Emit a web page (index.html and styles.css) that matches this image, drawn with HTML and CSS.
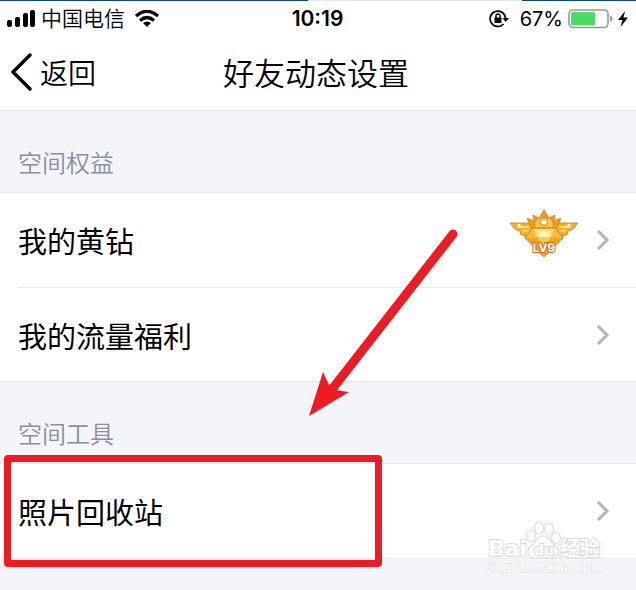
FILE: index.html
```html
<!DOCTYPE html>
<html lang="zh-CN">
<head>
    <meta charset="UTF-8">
    <meta name="viewport" content="width=device-width, initial-scale=1.0">
    <title>好友动态设置</title>
    <link rel="stylesheet" href="styles.css">
</head>
<body>

<div class="top-line"></div>

<div class="status-bar">
    <div class="status-left">
        <svg class="signal" width="30" height="18" viewBox="0 0 30 18">
            <rect x="0" y="10" width="5" height="7" rx="2"/>
            <rect x="8" y="7" width="5" height="10" rx="2"/>
            <rect x="16" y="3" width="5" height="14" rx="2"/>
            <rect x="23" y="0" width="5" height="17" rx="2"/>
        </svg>
        <span class="carrier">中国电信</span>
        <svg class="wifi" width="26" height="18" viewBox="0 0 26 18">
            <path d="M2 6Q13 -3.500 24 6M6 10.500Q13 4.500 20 10.500" fill="none" stroke="#000" stroke-width="3.200"/>
            <path d="M9 13Q13 10 17 13L13 17Z"/>
        </svg>
    </div>
    <div class="clock">10:19</div>
    <div class="status-right">
        <svg class="lock" width="20" height="18" viewBox="0 0 20 18">
            <path d="M16.500 8A7.700 7.700 0 1 0 14.500 14" fill="none" stroke="#000" stroke-width="1.700"/>
            <path d="M13.500 8H20L16.700 12Z"/>
            <rect x="5.500" y="7.500" width="7" height="5.500" rx="0.500"/>
            <path d="M7 8V6a2 2 0 0 1 4 0v2" fill="none" stroke="#000" stroke-width="1.400"/>
        </svg>
        <span class="percent">67%</span>
        <svg class="battery" width="45" height="20" viewBox="0 0 45 20">
            <rect x="1" y="1" width="39" height="17.500" rx="4" fill="#fff" stroke="#999" stroke-width="1.600"/>
            <rect x="3" y="3" width="24" height="13.500" rx="1.500" fill="#4cd964"/>
            <path d="M42 6.500Q44.500 7.500 44.500 9.800T42 13Z" fill="#999"/>
        </svg>
        <svg class="bolt" width="10" height="18" viewBox="0 0 10 18">
            <path d="M7 1L0 10H4.500L2.500 17L10 7.500H5.500Z"/>
        </svg>
    </div>
</div>

<header class="nav">
    <button class="back" type="button">
        <svg width="22" height="38" viewBox="0 0 22 38">
            <path d="M20 2L3 19L20 36" fill="none" stroke="#000" stroke-width="3.400" stroke-linecap="round" stroke-linejoin="round"/>
        </svg>
        <span>返回</span>
    </button>
    <h1>好友动态设置</h1>
</header>

<main class="settings">
    <h2>空间权益</h2>
    <ul class="list">
        <li>
            <a class="row" href="#">
                <span>我的黄钻</span>
                <svg class="badge" width="70" height="48" viewBox="0 0 70 48">
                    <g stroke="#bd8428" stroke-width="0.800" stroke-linejoin="round">
                        <path d="M1 13H24L27 28L23 32L16 28L17 26L11 24L12 22L6 19Z" fill="#f8b02c"/>
                        <path d="M69 13H46L43 28L47 32L54 28L53 26L59 24L58 22L64 19Z" fill="#f8b02c"/>
                        <path d="M18 8L25 11L24 5L30 8L35 0L40 8L46 5L45 11L52 8L47 20H23Z" fill="#f79c1d"/>
                        <path d="M25 18Q25 7 35 7T45 18Z" fill="#ffc545"/>
                        <path d="M24 18H46L54 28L35 47L16 28Z" fill="#ffb52d"/>
                    </g>
                    <path d="M7 16H21L20 18H9ZM12 20H20L18 22H15ZM63 16H49L50 18H61ZM58 20H50L52 22H55Z" fill="#ffdc68"/>
                    <path d="M24 19H46L52 27H18Z" fill="#ffe08a"/>
                    <path d="M24 19L29 27H18Z" fill="#fbbd3c"/>
                    <path d="M46 19L41 27H52Z" fill="#fbbd3c"/>
                    <path d="M35 19L42 27H28Z" fill="#fff0b4"/>
                    <path d="M17 28H28L35 36L42 28H53L35 46Z" fill="#f5a31b"/>
                    <path d="M28 27H42L35 36Z" fill="#ffcc50"/>
                    <path d="M9 14L12 17M58 17L61 14" stroke="#fff" stroke-width="2"/>
                    <circle cx="35" cy="12" r="3.500" fill="#fff" stroke="#ee9a24" stroke-width="1.500"/>
                    <text class="level" x="35" y="42" text-anchor="middle">LV9</text>
                </svg>
                <svg class="chevron" width="14" height="22" viewBox="0 0 14 22">
                    <path d="M2 2L11 11L2 20"/>
                </svg>
            </a>
        </li>
        <li>
            <a class="row" href="#">
                <span>我的流量福利</span>
                <svg class="chevron" width="14" height="22" viewBox="0 0 14 22">
                    <path d="M2 2L11 11L2 20"/>
                </svg>
            </a>
        </li>
    </ul>

    <h2>空间工具</h2>
    <ul class="list marked">
        <li>
            <a class="row" href="#">
                <span>照片回收站</span>
                <svg class="chevron" width="14" height="22" viewBox="0 0 14 22">
                    <path d="M2 2L11 11L2 20"/>
                </svg>
            </a>
        </li>
    </ul>

    <svg class="arrow" width="150" height="188" viewBox="0 0 150 188">
        <path d="M145 6L25 160" stroke="#ed1c24" stroke-width="9" stroke-linecap="round"/>
        <path d="M1 188L15 144L21 157L27 162L41 164Z" fill="#ed1c24"/>
    </svg>

    <svg class="watermark" width="120" height="58" viewBox="0 0 120 58">
        <g fill="#fff" stroke="#dcdcdc" stroke-width="1.200">
            <ellipse cx="44" cy="15" rx="4.500" ry="5.500"/>
            <ellipse cx="52" cy="7" rx="4.500" ry="6"/>
            <ellipse cx="62" cy="8" rx="4.500" ry="6"/>
            <ellipse cx="69" cy="17" rx="4.500" ry="5.500"/>
            <path d="M56 15C50 15 49 21 45 24C38 29 41 37 48 37C52 37 53 36 56 36C60 36 62 37 65 37C72 36 73 29 68 25C63 21 63 15 56 15Z"/>
        </g>
        <text class="mark" x="1" y="35">Bai</text>
        <text class="mark-du" x="47" y="34">du</text>
        <text class="mark-cn" x="73" y="35">经验</text>
        <text class="mark-url" x="1" y="51">jingyan.baidu.com</text>
    </svg>
</main>

</body>
</html>
```
FILE: styles.css
```css
* {
    box-sizing: border-box;
    margin: 0;
    padding: 0;
}
body {
    min-height: 100vh;
    display: flex;
    flex-direction: column;
    background-color: #fff;
    color: #000;
    font-family: "Noto Sans CJK SC", sans-serif;
}
.top-line {
    height: 1px;
    background: linear-gradient(to right, #124680 48.5%, #e6e6e6 48.5%, #e6e6e6 82%, #124680 82%);
}

/* status bar */
.status-bar {
    display: grid;
    grid-template-columns: 1fr auto 1fr;
    align-items: center;
    height: 36px;
    padding: 0 8px 0 7px;
    font-family: Inter, "Noto Sans CJK SC", sans-serif;
    font-size: 20px;
    line-height: 24px;
}
.status-left, .status-right {
    display: flex;
    align-items: center;
}
.carrier {
    margin-left: 4px;
    margin-right: 9px;
    font-size: 21px;
    font-weight: 350;
}
.clock {
    font-size: 21px;
    font-weight: 600;
}
.status-right {
    justify-content: flex-end;
}
.percent {
    margin-left: 11px;
    margin-right: 5px;
}
.bolt {
    margin-left: 5px;
}

/* title bar */
.nav {
    display: grid;
    grid-template-columns: 1fr auto 1fr;
    align-items: center;
    height: 74px;
    padding: 0 14px 4px 10px;
    border-bottom: 1px solid #e4e5ea;
}
.nav h1 {
    font-size: 31px;
    font-weight: 350;
    line-height: 40px;
}
.back {
    display: flex;
    align-items: center;
    justify-self: start;
    gap: 8px;
    border: 0;
    background: none;
    color: #000;
    font-family: inherit;
    font-size: 28px;
    font-weight: 350;
    line-height: 40px;
    cursor: pointer;
}

/* settings */
.settings {
    position: relative;
    flex: 1;
    background-color: #f4f5f9;
}
.settings h2 {
    padding: 34px 18px 14px;
    color: #8b8e9f;
    font-size: 24px;
    font-weight: 350;
    line-height: 33px;
}
.list {
    position: relative;
    list-style: none;
    background-color: #fff;
    border-top: 1px solid #e8e9ef;
    border-bottom: 1px solid #e8e9ef;
}
.list li {
    padding-left: 18px;
}
.list li + li .row {
    border-top: 1px solid #ebecf4;
}
.row {
    display: flex;
    align-items: center;
    height: 94px;
    padding-right: 26px;
    color: #000;
    font-size: 29px;
    line-height: 40px;
    text-decoration: none;
}
.badge {
    margin-left: auto;
    margin-right: 17px;
    margin-bottom: 12px;
}
.chevron {
    fill: none;
    stroke: #b1b3c2;
    stroke-width: 3px;
}
.row span + .chevron {
    margin-left: auto;
}
.level {
    fill: #fff;
    stroke: #e8652a;
    stroke-width: 2px;
    paint-order: stroke;
    font-family: Inter, sans-serif;
    font-size: 12px;
    font-weight: 700;
}

/* red marks */
.marked::after {
    content: "";
    box-sizing: border-box;
    position: absolute;
    top: -9px;
    left: 4px;
    width: 378px;
    height: 112px;
    border: 7px solid #ed1c24;
    border-radius: 4px;
    pointer-events: none;
}
.arrow {
    position: absolute;
    top: 117px;
    left: 308px;
    pointer-events: none;
}
.watermark {
    position: absolute;
    top: 410px;
    right: 29px;
    pointer-events: none;
}
.watermark text {
    fill: #fff;
    stroke: #dcdcdc;
    stroke-width: 2px;
    paint-order: stroke;
    font-family: "DejaVu Sans", "Noto Sans CJK SC", sans-serif;
    font-weight: 700;
}
.watermark .mark {
    font-size: 22px;
}
.watermark .mark-du {
    font-size: 14px;
}
.watermark .mark-cn {
    font-size: 20px;
}
.watermark .mark-url {
    font-family: Inter, sans-serif;
    font-size: 13px;
    font-weight: 500;
    stroke-width: 1px;
}
```
